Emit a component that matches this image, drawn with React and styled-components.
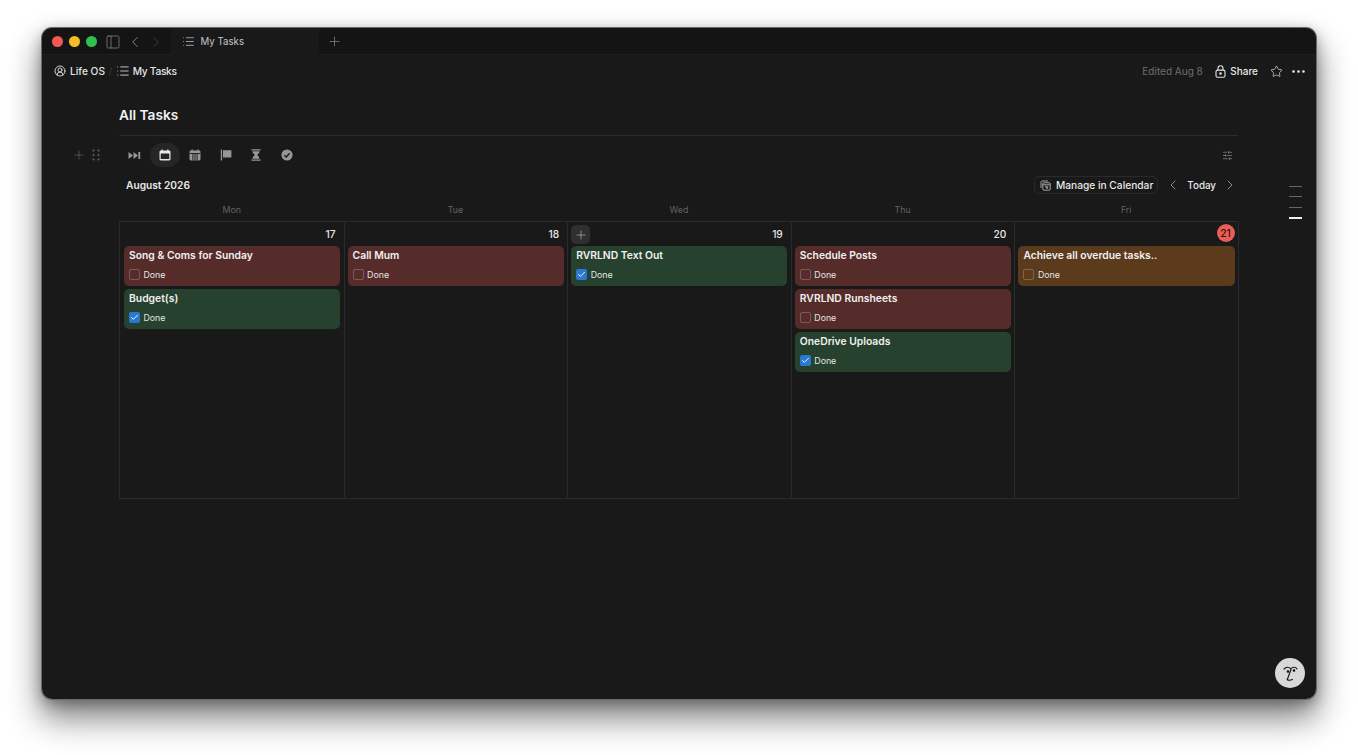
import React from 'react'
import styled, { createGlobalStyle } from 'styled-components'
import {
  ChevronLeft, ChevronRight, CircleUserRound, Ellipsis, List, PanelLeft, Plus,
  SlidersHorizontal, Star, Check,
} from 'lucide-react'

const GlobalStyle = createGlobalStyle`
  html, body {
    margin: 0;
    height: 755px;
    overflow: hidden;
    background: #fff;
    font-family: Inter, "Liberation Sans", sans-serif;
    -webkit-font-smoothing: antialiased;
  }
  * { box-sizing: border-box; }
`
const Page = styled.div`
  padding: 28px 42px 56px;
  height: 755px;
`
const WindowShadow = styled.div`
  border-radius: 10px;
  box-shadow: 0 0 0 1px #6a6a6a, 0 18px 32px 2px rgba(0,0,0,.48), 0 4px 14px rgba(0,0,0,.32);
`
const Window = styled.div`
  position: relative;
  height: 671px;
  background: #191919;
  border-radius: 10px;
  overflow: hidden;
  color: #e6e6e6;
`
const TitleBar = styled.div`
  height: 27px;
  display: flex;
  align-items: center;
  background: #141414;
  border-bottom: 1px solid #1f1f1f;
  padding: 1px 0 0 10px;
`
const Light = styled.span`
  width: 11px;
  height: 11px;
  border-radius: 50%;
  margin-right: 6px;
  background: ${p => p.$color};
`
const BarIcon = styled.span`
  display: flex;
  color: ${p => p.$dim ? '#3d3d3d' : '#8c8c8c'};
  margin-left: ${p => p.$left || 0}px;
`
const Tab = styled.div`
  width: 148px;
  height: 27px;
  margin: -1px 0 0 6px;
  padding: 1px 0 0 11px;
  display: flex;
  align-items: center;
  gap: 5.5px;
  background: #191919;
  font-size: 9.7px;
  color: #c4c4c4;
`
const NavBar = styled.div`
  height: 33px;
  padding: 0 9.5px 1px 12px;
  display: flex;
  align-items: center;
  justify-content: space-between;
`
const Crumbs = styled.div`
  display: flex;
  align-items: center;
  font-size: 10.2px;
  font-weight: 500;
  color: #e4e4e4;
`
const Slash = styled.span`
  color: #333;
  margin: 0 3.5px;
`
const CrumbIcon = styled.span`
  display: flex;
  margin-right: 4px;
`
const CrumbLabel = styled.span`
  letter-spacing: -.3px;
  margin-left: -1px;
`
const NavActions = styled.div`
  display: flex;
  align-items: center;
  font-size: 10px;
  font-weight: 500;
`
const Edited = styled.span`
  color: #6f6f6f;
  font-weight: 400;
  margin-right: 12.5px;
`
const ShareLabel = styled.span`
  margin: 0 11.5px 0 4px;
  color: #e8e8e8;
`
const MoreIcon = styled.span`
  display: flex;
  margin-left: 7px;
  color: #e8e8e8;
`
const Content = styled.div`
  position: relative;
  margin: 0 78px;
  padding-top: 18px;
`
const Heading = styled.h1`
  margin: 0 0 0 -1px;
  height: 30px;
  padding-bottom: 11px;
  font-size: 13.7px;
  line-height: 18px;
  font-weight: 600;
  color: #f2f2f2;
  border-bottom: 1px solid #2b2b2b;
`
const Handle = styled.div`
  position: absolute;
  left: -48px;
  top: 60px;
  display: flex;
  align-items: center;
  gap: 6px;
  color: #666;
`
const Views = styled.div`
  height: 38px;
  display: flex;
  align-items: center;
  margin-left: -1px;
`
const ViewButton = styled.span`
  width: 30.5px;
  height: 24px;
  display: flex;
  align-items: center;
  justify-content: center;
  border-radius: 12px;
  color: ${p => p.$active ? '#e8e8e8' : '#969696'};
  background: ${p => p.$active ? '#262626' : 'transparent'};
`
const Settings = styled.span`
  margin-left: auto;
  margin-right: 5px;
  display: flex;
  color: #a0a0a0;
`
const CalendarBar = styled.div`
  height: 22px;
  display: flex;
  align-items: center;
  padding: 0 0 0 6px;
  font-size: 10.2px;
  font-weight: 500;
  color: #e8e8e8;
`
const Month = styled.div`
  margin-right: auto;
  font-weight: 600;
`
const ManageButton = styled.div`
  height: 18px;
  display: flex;
  align-items: center;
  gap: 5px;
  padding: 0 4px 0 5px;
  border: 1px solid #2a2a2a;
  border-radius: 5px;
  margin-right: 7px;
`
const TodayLabel = styled.span`
  margin: 0 6px;
  font-size: 9.8px;
`
const NavChevron = styled.span`
  display: flex;
  color: #a6a6a6;
`
const WeekRow = styled.div`
  display: grid;
  grid-template-columns: repeat(5, 1fr);
  height: 24px;
  padding-top: 7px;
  margin-top: 1px;
  font-size: 8.8px;
  line-height: 12px;
  text-align: center;
  color: #636363;
`
const Grid = styled.div`
  display: grid;
  grid-template-columns: repeat(5, 1fr);
  height: 278px;
  margin: 0 -1px;
  border: 1px solid #2b2b2b;
`
const Day = styled.div`
  position: relative;
  padding: 0 3.5px 0 ${p => p.$first ? 4 : 3}px;
  border-left: ${p => p.$first ? 'none' : '1px solid #2b2b2b'};
`
const DayHead = styled.div`
  height: 24px;
  display: flex;
  align-items: center;
  justify-content: flex-end;
  padding-right: 4.5px;
  font-size: 10.2px;
  font-weight: 500;
  color: #e8e8e8;
`
const Today = styled.span`
  width: 18px;
  height: 18px;
  margin: -2px -4.5px 0 0;
  display: flex;
  align-items: center;
  justify-content: center;
  border-radius: 50%;
  background: #eb5d57;
  color: #2a1413;
`
const AddButton = styled.span`
  position: absolute;
  left: 3px;
  top: 3px;
  width: 19px;
  height: 19px;
  display: flex;
  align-items: center;
  justify-content: center;
  border-radius: 5px;
  background: #2f2f2f;
  color: #a8a8a8;
`
const Card = styled.div`
  height: 40px;
  margin-bottom: 3px;
  padding: 2px 5px 0;
  border-radius: 5px;
  background: ${p => ({ red: '#562c2b', green: '#26422f', orange: '#5c3a1c' })[p.$tone]};
`
const CardTitle = styled.div`
  font-size: 10.35px;
  line-height: 15px;
  font-weight: 600;
  color: #f0f0f0;
  white-space: nowrap;
`
const DoneRow = styled.div`
  margin-top: 6px;
  display: flex;
  align-items: center;
  gap: 3.5px;
  font-size: 8.8px;
  line-height: 11px;
  color: #e4e4e4;
`
const Box = styled.span`
  width: 11px;
  height: 11px;
  display: flex;
  align-items: center;
  justify-content: center;
  border-radius: 2px;
  border: ${p => p.$checked ? 'none' : '1px solid rgba(255,255,255,.22)'};
  background: ${p => p.$checked ? '#2a78d1' : 'transparent'};
  color: #fff;
`
const Outline = styled.div`
  position: absolute;
  right: 14px;
  top: 158px;
  display: flex;
  flex-direction: column;
  gap: 9.4px;
`
const OutlineLine = styled.span`
  display: block;
  width: 13px;
  height: ${p => p.$on ? 2 : 1}px;
  background: ${p => p.$on ? '#f0f0f0' : '#666'};
`
const Help = styled.div`
  position: absolute;
  right: 11px;
  bottom: 11px;
  width: 30px;
  height: 30px;
  display: flex;
  align-items: center;
  justify-content: center;
  border-radius: 50%;
  background: #d8d8d8;
  color: #111;
`

const GripIcon = () => (
  <svg width="8" height="12" viewBox="0 0 8 12" fill="currentColor">
    {[1.5, 6, 10.5].flatMap(y => [1.5, 6.5].map(x => <circle key={`${x}-${y}`} cx={x} cy={y} r="1" />))}
  </svg>
)
const SkipIcon = () => (
  <svg width="13" height="9" viewBox="0 0 13 9" fill="currentColor">
    <path d="M0.5 1v7l4.5-3.5zM5.5 1v7l4.5-3.5zM10.4 1h1.8v7h-1.8z" />
  </svg>
)
const CalendarIcon = () => (
  <svg width="12" height="12" viewBox="0 0 12 12" fill="none">
    <path fill="currentColor" d="M2.5 0.6h1.3v1h4.4v-1h1.3v1h.6c.8 0 1.4.6 1.4 1.4v7c0 .8-.6 1.4-1.4 1.4H1.9C1.1 11.4.5 10.8.5 10V3c0-.8.6-1.4 1.4-1.4h.6z" />
    <rect x="1.7" y="4.5" width="8.6" height="5.6" rx=".4" fill="#262626" />
  </svg>
)
const CalendarGridIcon = () => (
  <svg width="12" height="12" viewBox="0 0 12 12" fill="none">
    <path fill="currentColor" d="M2.5 0.6h1.3v1h4.4v-1h1.3v1h.6c.8 0 1.4.6 1.4 1.4v7c0 .8-.6 1.4-1.4 1.4H1.9C1.1 11.4.5 10.8.5 10V3c0-.8.6-1.4 1.4-1.4h.6z" />
    <path stroke="#191919" strokeWidth=".9" d="M.5 4.5h11M3.9 4.5v7M6 4.5v7M8.1 4.5v7" />
  </svg>
)
const FlagIcon = () => (
  <svg width="12" height="12" viewBox="0 0 12 12" fill="currentColor">
    <path d="M.8.5h1.3v11H.8zM3 1.2h8.4v7.2H3z" />
  </svg>
)
const HourglassIcon = () => (
  <svg width="10" height="12" viewBox="0 0 10 12" fill="currentColor">
    <path d="M.5.3h9v1.3h-9zM.5 10.4h9v1.3h-9zM1.5 2.2h7c0 2-1.500 2.800-2.400 3.800.9 1 2.400 1.800 2.400 3.800h-7c0-2 1.500-2.800 2.400-3.800C3 5 1.500 4.200 1.500 2.200z" />
  </svg>
)
const CheckCircleIcon = () => (
  <svg width="12" height="12" viewBox="0 0 12 12">
    <circle cx="6" cy="6" r="5.6" fill="currentColor" />
    <path d="M3.4 6.2 5.2 8l3.400-3.700" fill="none" stroke="#191919" strokeWidth="1.3" />
  </svg>
)
const LockIcon = () => (
  <svg width="11" height="13" viewBox="0 0 11 13" fill="none" stroke="#e8e8e8" strokeWidth="1.1">
    <rect x="1" y="5.1" width="9" height="7.2" rx="1.6" />
    <path d="M3 5V3.3a2.5 2.5 0 0 1 5 0V5" />
    <circle cx="5.5" cy="8.6" r=".7" fill="#e8e8e8" />
  </svg>
)
const StackedCalendarIcon = () => (
  <svg width="11" height="11" viewBox="0 0 11 11" fill="none" stroke="#b4b4b4" strokeWidth=".9">
    <path d="M1 8V2.2C1 1.5 1.5 1 2.2 1H8" />
    <rect x="2.8" y="2.8" width="7.4" height="7.4" rx="1" />
    <path d="M2.8 4.8h7.4M5 6.3h1.3v2.4M7.6 6.3v2.4" />
  </svg>
)
const HelpGlyph = () => (
  <svg width="15" height="17" viewBox="0 0 15 17" fill="none" stroke="currentColor" strokeWidth="1.1" strokeLinecap="round">
    <path d="M1 4.2C3 1.5 6 1.8 7.8 3.8 9.5 1.8 12.5 1.8 14 3.8" />
    <path d="M8 4.5 4.2 14.7c1.7.8 3.5.6 5.3-.2" />
    <circle cx="11" cy="5.5" r=".8" fill="currentColor" />
    <circle cx="5" cy="6.5" r=".8" fill="currentColor" />
  </svg>
)

const days = [
  { name: 'Mon', date: 17, tasks: [
    { title: 'Song & Coms for Sunday', tone: 'red' },
    { title: 'Budget(s)', tone: 'green', done: true },
  ] },
  { name: 'Tue', date: 18, tasks: [{ title: 'Call Mum', tone: 'red' }] },
  { name: 'Wed', date: 19, add: true, tasks: [{ title: 'RVRLND Text Out', tone: 'green', done: true }] },
  { name: 'Thu', date: 20, tasks: [
    { title: 'Schedule Posts', tone: 'red' },
    { title: 'RVRLND Runsheets', tone: 'red' },
    { title: 'OneDrive Uploads', tone: 'green', done: true },
  ] },
  { name: 'Fri', date: 21, today: true, tasks: [{ title: 'Achieve all overdue tasks..', tone: 'orange' }] },
]

const TaskCard = ({ title, tone, done }) => (
  <Card $tone={tone}>
    <CardTitle>{title}</CardTitle>
    <DoneRow>
      <Box $checked={done}>{done && <Check size={9} strokeWidth={2.5} />}</Box>
      Done
    </DoneRow>
  </Card>
)

const App = () => (
  <Page>
    <GlobalStyle />
    <WindowShadow>
      <Window>
        <TitleBar>
          <Light $color="#f15a52" />
          <Light $color="#f6be22" />
          <Light $color="#2ec24d" />
          <BarIcon $left={2}><PanelLeft size={16} strokeWidth={1.1} /></BarIcon>
          <BarIcon $left={5}><ChevronLeft size={18} strokeWidth={1.2} /></BarIcon>
          <BarIcon $left={3} $dim><ChevronRight size={18} strokeWidth={1.2} /></BarIcon>
          <Tab><List size={13} strokeWidth={1.4} />My Tasks</Tab>
          <BarIcon $left={8}><Plus size={15} strokeWidth={1.1} /></BarIcon>
        </TitleBar>
        <NavBar>
          <Crumbs>
            <CrumbIcon><CircleUserRound size={12} strokeWidth={1.8} /></CrumbIcon>
            Life OS
            <Slash>/</Slash>
            <CrumbIcon><List size={14} strokeWidth={1.4} /></CrumbIcon>
            <CrumbLabel>My Tasks</CrumbLabel>
          </Crumbs>
          <NavActions>
            <Edited>Edited Aug 8</Edited>
            <LockIcon />
            <ShareLabel>Share</ShareLabel>
            <Star size={13} strokeWidth={1.3} color="#e8e8e8" />
            <MoreIcon><Ellipsis size={17} strokeWidth={1.8} /></MoreIcon>
          </NavActions>
        </NavBar>
        <Content>
          <Heading>All Tasks</Heading>
          <Handle>
            <Plus size={14} strokeWidth={1.2} />
            <GripIcon />
          </Handle>
          <Views>
            <ViewButton><SkipIcon /></ViewButton>
            <ViewButton $active><CalendarIcon /></ViewButton>
            <ViewButton><CalendarGridIcon /></ViewButton>
            <ViewButton><FlagIcon /></ViewButton>
            <ViewButton><HourglassIcon /></ViewButton>
            <ViewButton><CheckCircleIcon /></ViewButton>
            <Settings><SlidersHorizontal size={11} strokeWidth={1.3} /></Settings>
          </Views>
          <CalendarBar>
            <Month>August 2026</Month>
            <ManageButton><StackedCalendarIcon />Manage in Calendar</ManageButton>
            <NavChevron><ChevronLeft size={16} strokeWidth={1.2} /></NavChevron>
            <TodayLabel>Today</TodayLabel>
            <NavChevron><ChevronRight size={16} strokeWidth={1.2} /></NavChevron>
          </CalendarBar>
          <WeekRow>
            {days.map(d => <div key={d.name}>{d.name}</div>)}
          </WeekRow>
          <Grid>
            {days.map((d, i) => (
              <Day key={d.name} $first={i === 0}>
                {d.add && <AddButton><Plus size={14} strokeWidth={1.3} /></AddButton>}
                <DayHead>{d.today ? <Today>{d.date}</Today> : d.date}</DayHead>
                {d.tasks.map(t => <TaskCard key={t.title} {...t} />)}
              </Day>
            ))}
          </Grid>
        </Content>
        <Outline>
          <OutlineLine />
          <OutlineLine />
          <OutlineLine />
          <OutlineLine $on />
        </Outline>
        <Help><HelpGlyph /></Help>
      </Window>
    </WindowShadow>
  </Page>
)

export default App
